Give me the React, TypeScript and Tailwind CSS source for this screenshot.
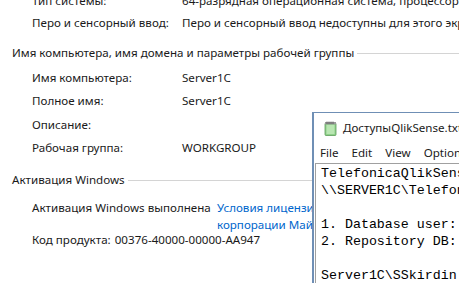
import React from "react";

const Row = ({ label, value, className = "" }: { label: string; value?: string; className?: string }) => (
  <div className={`flex h-[22px] items-center pl-[32px] ${className}`}>
    <div className="w-[150px] shrink-0 whitespace-nowrap">{label}</div>
    <div className="whitespace-nowrap">{value}</div>
  </div>
);

const Heading = ({ text, className = "" }: { text: string; className?: string }) => (
  <div className={`flex h-[22px] items-center pl-[12px] ${className}`}>
    <span className="whitespace-nowrap">{text}</span>
    <div className="ml-[3px] h-px flex-1 bg-[#d4d4d4]" />
  </div>
);

const NotepadIcon = () => (
  <svg width="13" height="15" viewBox="0 0 13 15">
    <rect x="1" y="2" width="11" height="12.5" rx="1" fill="#8fd18a" stroke="#5a9a58" strokeWidth="0.8" />
    <rect x="2.5" y="4" width="8" height="9" fill="#b9e6b2" />
    <rect x="1" y="1" width="11" height="2.4" fill="#9a9a9a" />
    <line x1="3" y1="0.5" x2="3" y2="3" stroke="#555" strokeWidth="0.8" />
    <line x1="5" y1="0.5" x2="5" y2="3" stroke="#555" strokeWidth="0.8" />
    <line x1="7" y1="0.5" x2="7" y2="3" stroke="#555" strokeWidth="0.8" />
    <line x1="9" y1="0.5" x2="9" y2="3" stroke="#555" strokeWidth="0.8" />
  </svg>
);

export default function App() {
  return (
    <div
      className="relative h-[283px] w-[459px] overflow-hidden bg-white text-[11.6px] text-[#1a1a1a]"
      style={{ fontFamily: '"Noto Sans", "Segoe UI", sans-serif' }}
    >
      <div className="-mt-[10px]">
        <Row label="Тип системы:" value="64-разрядная операционная система, процессор x64" />
        <Row label="Перо и сенсорный ввод:" value="Перо и сенсорный ввод недоступны для этого экрана" />
        <Heading className="mt-[8px]" text="Имя компьютера, имя домена и параметры рабочей группы" />
        <Row className="mt-[3px]" label="Имя компьютера:" value="Server1C" />
        <Row className="mt-[1px]" label="Полное имя:" value="Server1C" />
        <Row className="mt-[2px]" label="Описание:" value="" />
        <Row className="mt-[1px]" label="Рабочая группа:" value="WORKGROUP" />
        <Heading className="mt-[10px]" text="Активация Windows" />
        <div className="mt-[8px] flex pl-[32px] leading-[17px]">
          <div className="w-[185px] shrink-0 whitespace-nowrap">Активация Windows выполнена</div>
          <div className="whitespace-nowrap text-[#0066cc]">
            <div>Условия лицензионного соглашения</div>
            <div>корпорации Майкрософт</div>
          </div>
        </div>
        <div className="-mt-[2px] flex h-[17px] items-center pl-[32px] leading-[17px]">
          <span>Код продукта:</span>
          <span className="ml-[4px]">00376-40000-00000-AA947</span>
        </div>
      </div>

      {/* Notepad window */}
      <div className="absolute left-[312px] top-[112px] h-[200px] w-[200px] border-l-[2px] border-t border-[#6f8fb5] bg-white">
        <div className="flex h-[30px] items-center pl-[10px]">
          <NotepadIcon />
          <span className="ml-[6px] whitespace-nowrap">ДоступыQlikSense.txt</span>
        </div>
        <div className="flex h-[20px] items-center gap-[13px] pl-[6px] whitespace-nowrap">
          <span>File</span>
          <span>Edit</span>
          <span>View</span>
          <span>Options</span>
        </div>
        <div
          className="ml-[1px] border-l border-t border-[#a0a0a0] pl-[5px] pt-[1px] text-[13.3px] leading-[17px] text-black"
          style={{ fontFamily: '"Liberation Mono", "Courier New", monospace' }}
        >
          <div className="whitespace-pre">TelefonicaQlikSense</div>
          <div className="whitespace-pre">\\SERVER1C\TelefonicaQlikSense</div>
          <div className="h-[17px]" />
          <div className="whitespace-pre">1. Database user: qliksenserepository</div>
          <div className="whitespace-pre">2. Repository DB: QSR</div>
          <div className="h-[17px]" />
          <div className="whitespace-pre">Server1C\SSkirdin</div>
        </div>
      </div>
    </div>
  );
}
